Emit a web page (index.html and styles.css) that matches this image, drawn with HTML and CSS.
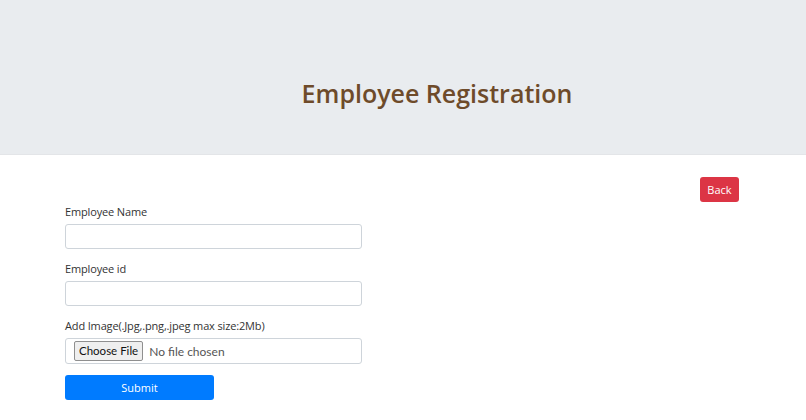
FILE: index.html
```html
<!DOCTYPE html>
<html>
<head>
<meta charset="utf-8">
<link rel="stylesheet" href="styles.css">
</head>
<body>
<header class="hero">
  <h1 class="title">Employee Registration</h1>
</header>
<main class="content">
  <div class="topbar">
    <button class="btn-back" type="button">Back</button>
  </div>
  <form class="form">
    <label class="label">Employee Name</label>
    <div class="input"></div>
    <label class="label">Employee id</label>
    <div class="input"></div>
    <label class="label">Add Image(.Jpg,.png,.jpeg max size:2Mb)</label>
    <div class="input file">
      <span class="choose">Choose File</span>
      <span class="nofile">No file chosen</span>
    </div>
    <button class="btn-submit" type="button">Submit</button>
  </form>
</main>
</body>
</html>
```
FILE: styles.css
```css
* { box-sizing: border-box; }
html, body { margin: 0; padding: 0; background: #fff; }
body {
  font-family: "Open Sans", "Noto Sans", sans-serif;
  color: #212529;
  width: 806px;
  height: 420px;
  overflow: hidden;
}
.hero {
  background: #e9ecef;
  height: 155px;
  display: flex;
  align-items: center;
  justify-content: center;
  padding-left: 68px;
  border-bottom: 1px solid #e3e5e8;
}
.title {
  margin: 0;
  padding-top: 32px;
  font-size: 25px;
  font-weight: 600;
  color: #6e4b2a;
}
.content {
  padding: 22px 67px 0 65px;
}
.topbar {
  display: flex;
  justify-content: flex-end;
  height: 25px;
}
.btn-back {
  background: #dc3545;
  color: #fff;
  border: none;
  border-radius: 3px;
  width: 39px;
  height: 25px;
  padding: 0;
  font-family: inherit;
  font-size: 11px;
}
.form {
  display: flex;
  flex-direction: column;
  align-items: flex-start;
  margin-top: 2px;
}
.label {
  font-size: 11px;
  letter-spacing: -0.15px;
  color: #333;
  line-height: 16px;
  margin-bottom: 4px;
}
.input {
  width: 297px;
  height: 25px;
  border: 1px solid #ced4da;
  border-radius: 3px;
  background: #fff;
  margin-bottom: 12px;
}
.file {
  display: flex;
  align-items: center;
  padding-left: 8px;
  font-family: "Lato", "Open Sans", sans-serif;
  font-size: 12px;
  height: 26px;
  margin-bottom: 11px;
}
.choose {
  background: #efefef;
  border: 1px solid #8f8f8f;
  border-radius: 2px;
  height: 20px;
  line-height: 18px;
  padding: 0 4px;
  font-size: 11.5px;
  color: #111;
}
.nofile {
  margin-left: 6px;
  color: #555;
}
.btn-submit {
  width: 149px;
  height: 25px;
  background: #007bff;
  color: #fff;
  border: none;
  border-radius: 3px;
  font-family: inherit;
  font-size: 11px;
  padding: 0;
}
```
